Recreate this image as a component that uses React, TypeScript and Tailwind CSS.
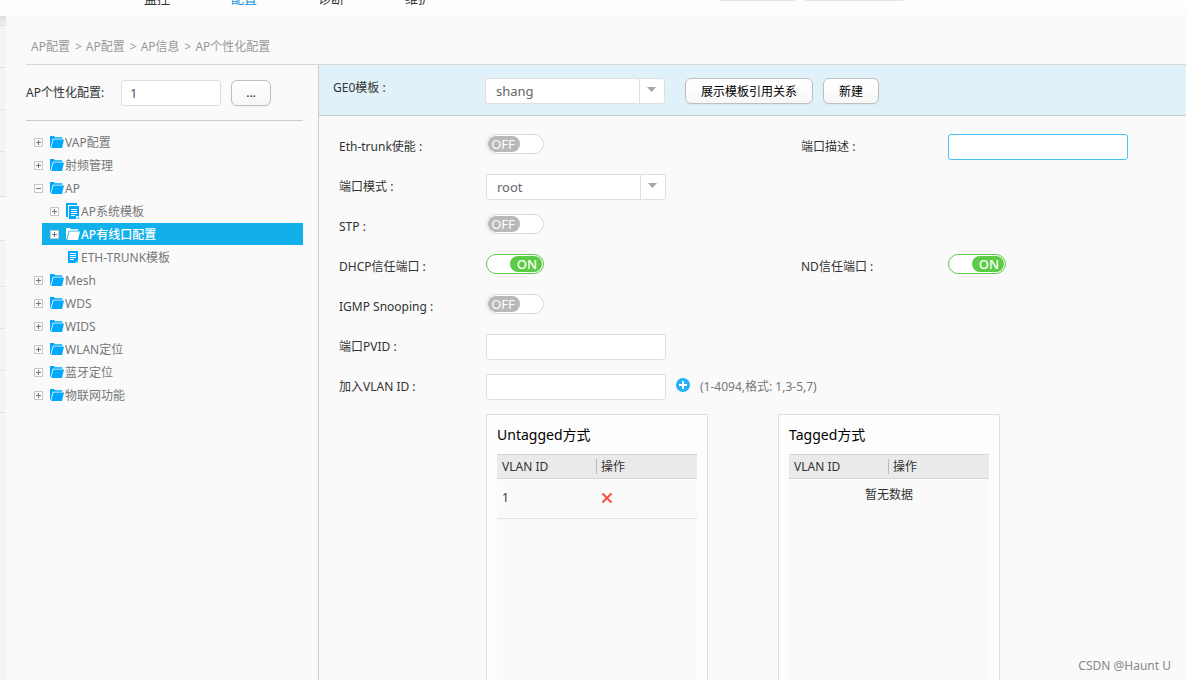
import { useState } from "react";

type IconKind = "folder" | "docs" | "doc";

type TreeNode = {
  label: string;
  icon: IconKind;
  open?: boolean;
  leaf?: boolean;
  active?: boolean;
  children?: TreeNode[];
};

const TREE: TreeNode[] = [
  { label: "VAP配置", icon: "folder" },
  { label: "射频管理", icon: "folder" },
  {
    label: "AP",
    icon: "folder",
    open: true,
    children: [
      { label: "AP系统模板", icon: "docs" },
      { label: "AP有线口配置", icon: "folder", active: true },
      { label: "ETH-TRUNK模板", icon: "doc", leaf: true },
    ],
  },
  { label: "Mesh", icon: "folder" },
  { label: "WDS", icon: "folder" },
  { label: "WIDS", icon: "folder" },
  { label: "WLAN定位", icon: "folder" },
  { label: "蓝牙定位", icon: "folder" },
  { label: "物联网功能", icon: "folder" },
];

const NAV = ["监控", "配置", "诊断", "维护"];
const CRUMBS = ["AP配置", "AP配置", "AP信息", "AP个性化配置"];

function ExpandIcon({ open, hidden }: { open?: boolean; hidden?: boolean }) {
  if (hidden) return <span className="w-[9px] shrink-0" />;
  return (
    <svg width="9" height="9" viewBox="0 0 9 9" className="shrink-0" shapeRendering="crispEdges">
      <rect x="0.5" y="0.5" width="8" height="8" fill="#fcfcfc" stroke="#c8c8c8" />
      <path d="M2 4.5h5" stroke="#777" />
      {!open && <path d="M4.5 2v5" stroke="#777" />}
    </svg>
  );
}

function NodeIcon({ kind }: { kind: IconKind }) {
  if (kind === "folder") {
    return (
      <svg width="14" height="12" viewBox="0 0 14 12" className="shrink-0" fill="currentColor">
        <path d="M0 0h4l1 1.2h7.3v1.6H2.8L0.6 11H0z" />
        <path d="M3.5 3.6H14L12 12H1.2z" />
      </svg>
    );
  }
  if (kind === "docs") {
    return (
      <svg width="14" height="16" viewBox="0 0 14 16" className="shrink-0">
        <path d="M0 0h11v2H2v12H0z" fill="currentColor" />
        <path d="M3 3h10v10l-3 3H3z" fill="currentColor" />
        <path d="M5 6.5h6M5 8.5h6M5 10.5h6M5 12.5h4" stroke="#fff" />
        <path d="M10 13h3l-3 3z" fill="#fff" />
        <path d="M11 15.5l2-2v2z" fill="currentColor" />
      </svg>
    );
  }
  return (
    <svg width="14" height="12" viewBox="0 0 14 12" className="shrink-0">
      <path d="M2 0h10v9l-3 3H2z" fill="currentColor" />
      <path d="M4 2.5h6M4 4.5h6M4 6.5h6M4 8.5h4" stroke="#fff" />
      <path d="M10 11.5l2-2v2z" fill="currentColor" />
    </svg>
  );
}

function TreeItem({ node }: { node: TreeNode }) {
  return (
    <li>
      <button
        type="button"
        className={
          node.active
            ? "mb-px flex h-[22px] w-full items-center bg-[#12b0eb] pl-2 text-left font-medium text-white"
            : "mb-px flex h-[22px] w-full items-center pl-2 text-left text-[#777]"
        }
      >
        <ExpandIcon open={node.open} hidden={node.leaf} />
        <span className={node.active ? "ml-[7px] text-white" : "ml-[7px] text-[#00a8fc]"}>
          <NodeIcon kind={node.icon} />
        </span>
        <span className="pt-0.5 pl-px">{node.label}</span>
      </button>
      {node.children && (
        <ul className="pl-4">
          {node.children.map((child) => (
            <TreeItem key={child.label} node={child} />
          ))}
        </ul>
      )}
    </li>
  );
}

function Toggle({ id, initial = false }: { id: string; initial?: boolean }) {
  const [on, setOn] = useState(initial);
  return (
    <button
      id={id}
      type="button"
      role="switch"
      aria-checked={on}
      onClick={() => setOn(!on)}
      className={
        on
          ? "flex h-5 w-[58px] items-center justify-end rounded-full border border-[#5cc94a] bg-white px-px"
          : "flex h-5 w-[58px] items-center rounded-full border border-[#d9d9d9] bg-white px-px"
      }
    >
      <span
        className={
          on
            ? "flex h-4 w-8 items-center justify-center rounded-full bg-[#5ccb45] pt-px pl-0.5 text-[13px] font-medium text-white"
            : "flex h-4 w-8 items-center justify-center rounded-full bg-[#b9b9b9] pt-px pr-0.5 text-[13px] text-white"
        }
      >
        {on ? "ON" : "OFF"}
      </span>
    </button>
  );
}

function SelectBox({ id, value }: { id: string; value: string }) {
  return (
    <div className="relative h-[26px] w-[180px]">
      <select
        id={id}
        defaultValue={value}
        className="h-full w-full appearance-none rounded-[3px] border border-[#dfdfdf] bg-white pt-0.5 pr-7 pl-[10px] text-[13px] text-[#666] outline-none"
      >
        <option>{value}</option>
      </select>
      <span className="pointer-events-none absolute top-px right-0 flex h-6 w-[26px] items-start justify-center border-l border-[#dfdfdf] pt-2 pr-0.5">
        <svg width="9" height="5" viewBox="0 0 9 5">
          <path d="M0 0h9L4.5 5z" fill="#a6a6a6" />
        </svg>
      </span>
    </div>
  );
}

function Label({ htmlFor, children }: { htmlFor: string; children: string }) {
  return (
    <label htmlFor={htmlFor} className="h-[26px] leading-[26px] text-[#333]">
      {children} :
    </label>
  );
}

const inputClass =
  "h-[26px] w-[180px] rounded-[3px] border border-[#dfdfdf] bg-white px-2 text-[13px] text-[#666] outline-none";

function VlanTable({ title, rows }: { title: string; rows: string[] }) {
  return (
    <section className="flex w-[222px] flex-col border border-b-0 border-[#dfdfdf] bg-[#fdfdfd] px-[10px]">
      <h2 className="h-[39px] text-sm leading-[39px] text-black">{title}</h2>
      <div className="flex-1 bg-[#fafafa]">
        <table className="w-full table-fixed border-collapse text-left text-[#333]">
          <thead>
            <tr className="h-6 border-y border-[#d6d6d6] bg-[#eaeaea]">
              <th className="w-[99px] pl-[5px] font-normal">VLAN ID</th>
              <th className="font-normal">
                <span className="block h-[15px] border-l border-[#bbb] pl-1 leading-[15px]">操作</span>
              </th>
            </tr>
          </thead>
          <tbody>
            {rows.map((id) => (
              <tr key={id} className="h-10 border-b border-[#e3e3e3]">
                <td className="pb-0.5 pl-[5px]">{id}</td>
                <td className="pb-0.5 pl-[5px]">
                  <button type="button" aria-label="删除" className="block">
                    <svg width="12" height="12" viewBox="0 0 12 12">
                      <path d="M1.5 1.5l9 9M10.5 1.5l-9 9" stroke="#f9503f" strokeWidth="2" />
                    </svg>
                  </button>
                </td>
              </tr>
            ))}
            {rows.length === 0 && (
              <tr className="h-8">
                <td colSpan={2} className="text-center">
                  暂无数据
                </td>
              </tr>
            )}
          </tbody>
        </table>
      </div>
    </section>
  );
}

function Rail() {
  const line = "border-b border-[#e3e3e3]";
  return (
    <div className="mt-px w-[6px] shrink-0 bg-[#f4f4f4]">
      <div className={`h-[10px] bg-linear-to-b from-[#dedede] to-[#f0f0f0] ${line}`} />
      <div className={`h-[42px] ${line}`} />
      <div className={`h-[42px] ${line}`} />
      <div className={`h-[42px] ${line}`} />
      <div className={`h-[45px] ${line}`} />
      <div className={`h-11 bg-[#fafafa] ${line}`} />
      <div className={`h-[46px] ${line}`} />
      <div className={`h-[42px] ${line}`} />
      <div className={`h-[42px] ${line}`} />
      <div className={`h-[42px] ${line}`} />
    </div>
  );
}

export default function App() {
  return (
    <div className="relative flex min-h-screen flex-col bg-[#fafafa] font-['Noto_Sans','Noto_Sans_CJK_SC',sans-serif] text-xs text-[#333]">
      {/* Bottom edge of the main navigation */}
      <header className="flex h-[15px] shrink-0 overflow-hidden bg-[#fdfdfd]">
        <nav className="flex w-[720px] shrink-0 items-end pb-[7px] pl-[144px] text-[13px] leading-5">
          {NAV.map((item) => (
            <a
              key={item}
              href="#"
              className={item === "配置" ? "w-[87px] text-[#0d8fdb]" : "w-[87px] text-[#333]"}
            >
              {item}
            </a>
          ))}
        </nav>
        <div className="flex gap-[10px]">
          <span className="h-px w-[75px] bg-[#e5e5e5]" />
          <span className="h-px w-[98px] bg-[#e5e5e5]" />
        </div>
      </header>

      <div className="flex flex-1">
        <Rail />
        <div className="flex min-w-0 flex-1 flex-col pl-5">
          <nav className="flex h-[50px] items-center gap-[5px] border-b border-[#d6d6d6] pt-[14px] pl-[5px] text-[#999]">
            {CRUMBS.map((crumb, i) => (
              <span key={i} className="flex gap-1">
                {i > 0 && <span>&gt;</span>}
                <a href="#">{crumb}</a>
              </span>
            ))}
          </nav>

          <div className="flex flex-1">
            <aside className="w-[292px] shrink-0 pr-[15px]">
              <div className="flex h-14 items-center border-b border-[#ccc]">
                <label htmlFor="ap-id" className="w-[95px]">
                  AP个性化配置:
                </label>
                <input
                  id="ap-id"
                  defaultValue="1"
                  className="h-[26px] w-[100px] rounded-[3px] border border-[#dfdfdf] bg-white px-2 text-[13px] text-[#555] outline-none"
                />
                <button
                  type="button"
                  className="ml-[10px] h-[26px] w-10 rounded-md border border-[#bfbfbf] bg-linear-to-b from-white to-[#f7f7f7] text-[#222] shadow-xs"
                >
                  ...
                </button>
              </div>
              <ul className="pt-[10px]">
                {TREE.map((node) => (
                  <TreeItem key={node.label} node={node} />
                ))}
              </ul>
            </aside>

            <main className="flex min-w-0 flex-1 flex-col border-l border-[#ccc]">
              <div className="flex h-[51px] shrink-0 border-b border-[#ccc] bg-[#e0f1fa] pt-[13px] pl-[14px]">
                <label htmlFor="ge0" className="w-[152px] leading-5 text-[#333]">
                  GE0模板 :
                </label>
                <SelectBox id="ge0" value="shang" />
                <button
                  type="button"
                  className="ml-5 h-[26px] w-32 rounded-md border border-[#bfbfbf] bg-linear-to-b from-white to-[#f7f7f7] pt-0.5 text-black shadow-xs"
                >
                  展示模板引用关系
                </button>
                <button
                  type="button"
                  className="ml-[10px] h-[26px] w-14 rounded-md border border-[#bfbfbf] bg-linear-to-b from-white to-[#f7f7f7] pt-0.5 text-black shadow-xs"
                >
                  新建
                </button>
              </div>

              <div className="grid auto-rows-[26px] grid-cols-[147px_315px_147px_1fr] gap-y-[14px] pt-[18px] pl-5">
                <Label htmlFor="eth-trunk">Eth-trunk使能</Label>
                <Toggle id="eth-trunk" />
                <Label htmlFor="port-desc">端口描述</Label>
                <input
                  id="port-desc"
                  className="h-[26px] w-[180px] rounded-[3px] border border-[#4cc3f5] bg-white px-2 text-[13px] outline-none"
                />

                <Label htmlFor="port-mode">端口模式</Label>
                <div className="col-span-3">
                  <SelectBox id="port-mode" value="root" />
                </div>

                <Label htmlFor="stp">STP</Label>
                <div className="col-span-3">
                  <Toggle id="stp" />
                </div>

                <Label htmlFor="dhcp-trust">DHCP信任端口</Label>
                <Toggle id="dhcp-trust" initial />
                <Label htmlFor="nd-trust">ND信任端口</Label>
                <Toggle id="nd-trust" initial />

                <Label htmlFor="igmp">IGMP Snooping</Label>
                <div className="col-span-3">
                  <Toggle id="igmp" />
                </div>

                <Label htmlFor="pvid">端口PVID</Label>
                <div className="col-span-3">
                  <input id="pvid" className={inputClass} />
                </div>

                <Label htmlFor="vlan">加入VLAN ID</Label>
                <div className="col-span-3 flex items-center">
                  <input id="vlan" className={inputClass} />
                  <button type="button" aria-label="添加" className="mr-[10px] mb-1 ml-[10px]">
                    <svg width="14" height="14" viewBox="0 0 14 14">
                      <circle cx="7" cy="7" r="7" fill="#1fb1fb" />
                      <path d="M7 3v8M3 7h8" stroke="#fff" strokeWidth="2" />
                    </svg>
                  </button>
                  <span className="text-[#777]">(1-4094,格式: 1,3-5,7)</span>
                </div>
              </div>

              <div className="mt-[14px] flex flex-1 gap-[70px] pl-[167px]">
                <VlanTable title="Untagged方式" rows={["1"]} />
                <VlanTable title="Tagged方式" rows={[]} />
              </div>
            </main>
          </div>
        </div>
      </div>

      <span className="absolute right-[15px] bottom-[6px] text-xs text-[#888]">CSDN @Haunt U</span>
    </div>
  );
}
